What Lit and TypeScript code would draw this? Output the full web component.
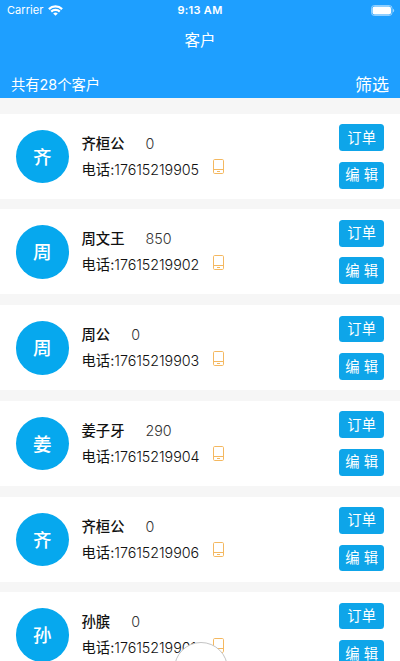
import { LitElement, css, html } from 'lit';
import { customElement, property } from 'lit/decorators.js';

interface Customer {
  name: string;
  amount: number;
  phone: string;
}

const CUSTOMERS: Customer[] = [
  { name: '齐桓公', amount: 0, phone: '17615219905' },
  { name: '周文王', amount: 850, phone: '17615219902' },
  { name: '周公', amount: 0, phone: '17615219903' },
  { name: '姜子牙', amount: 290, phone: '17615219904' },
  { name: '齐桓公', amount: 0, phone: '17615219906' },
  { name: '孙膑', amount: 0, phone: '17615219901' },
];

/** iOS style status bar: carrier, clock, battery. */
@customElement('status-bar')
export class StatusBar extends LitElement {
  render() {
    return html`
      <div class="side">
        <span>Carrier</span>
        <svg width="15" height="11" viewBox="0 0 15 11" fill="none" stroke="#fff" stroke-width="2.2">
          <path d="M0.9 4.1a9.4 9.4 0 0 1 13.2 0" />
          <path d="M3.2 6.6a6.1 6.1 0 0 1 8.6 0" />
          <path d="M7.5 10.8 5.2 8.5a3.3 3.3 0 0 1 4.6 0z" fill="#fff" stroke="none" />
        </svg>
      </div>
      <span class="time">9:13 AM</span>
      <div class="side end">
        <svg width="24" height="11" viewBox="0 0 24 11">
          <rect x="0.5" y="0.5" width="20.5" height="10" rx="2.8" fill="none" stroke="#fff" stroke-opacity="0.5" />
          <rect x="1.5" y="1.5" width="18.5" height="8" rx="2" fill="#fff" />
          <path d="M22 3.7c1.6 0.5 1.6 3.1 0 3.6z" fill="#fff" fill-opacity="0.55" />
        </svg>
      </div>
    `;
  }

  static styles = css`
    :host {
      display: flex;
      align-items: center;
      height: 20px;
      padding: 0 5px 0 7px;
      font-size: 11px;
      line-height: 20px;
    }

    .side {
      display: flex;
      flex: 1;
      align-items: center;
      gap: 5px;
      letter-spacing: 0.05px;
    }

    .end {
      justify-content: flex-end;
    }

    .time {
      position: relative;
      left: -1px;
      font-weight: 600;
      letter-spacing: 0.3px;
    }
  `;
}

@customElement('customer-card')
export class CustomerCard extends LitElement {
  @property({ attribute: false })
  customer!: Customer;

  render() {
    const { name, amount, phone } = this.customer;
    return html`
      <div class="avatar">${name[0]}</div>
      <div class="info">
        <div class="line">
          <span class="name">${name}</span>
          <span class="amount">${amount}</span>
        </div>
        <div class="line">
          <span class="phone">电话:<span class="number">${phone}</span></span>
          <svg width="11" height="15" viewBox="0 0 11 15" fill="none" stroke="#f4b860">
            <rect x="0.5" y="0.5" width="10" height="14" rx="1.2" />
            <path d="M0.5 10.5h10M4 12.5h3" />
          </svg>
        </div>
      </div>
      <div class="actions">
        <button type="button">订单</button>
        <button type="button">编 辑</button>
      </div>
    `;
  }

  static styles = css`
    :host {
      display: flex;
      align-items: flex-start;
      box-sizing: border-box;
      height: 85px;
      padding: 0 15.7px 0 15.5px;
      background: #fff;
      color: #111;
    }

    .avatar {
      width: 53.4px;
      height: 53.4px;
      margin-top: 16px;
      border-radius: 50%;
      background: #06a8ee;
      color: #fff;
      font-size: 18.5px;
      font-weight: 500;
      line-height: 54px;
      text-align: center;
    }

    .info {
      flex: 1;
      margin: 17px 0 0 12.7px;
    }

    .line {
      display: flex;
      align-items: center;
      height: 26px;
      font-size: 14.3px;
      line-height: 26px;
      white-space: nowrap;
    }

    .name {
      margin-right: 21px;
      font-weight: 500;
    }

    .amount {
      color: #333;
      font-weight: 300;
    }

    .phone {
      width: 131.4px;
    }

    .number {
      font-weight: 350;
      letter-spacing: -0.03px;
    }

    .line svg {
      margin-top: -6px;
    }

    .actions {
      display: flex;
      flex-direction: column;
      gap: 10.8px;
      margin-top: 10.4px;
    }

    button {
      width: 45.3px;
      height: 26.8px;
      padding: 0;
      border: 0;
      border-radius: 3.5px;
      background: #0ea5e9;
      color: #fff;
      font-family: inherit;
      font-size: 14.3px;
      line-height: 26px;
    }
  `;
}

@customElement('app-root')
export class AppRoot extends LitElement {
  render() {
    return html`
      <header>
        <status-bar></status-bar>
        <div class="title">客户</div>
        <div class="summary">
          <span>共有28个客户</span>
          <span class="filter">筛选</span>
        </div>
      </header>
      <main>
        ${CUSTOMERS.map((customer) => html`<customer-card .customer=${customer}></customer-card>`)}
      </main>
      <div class="fab"></div>
    `;
  }

  static styles = css`
    :host {
      display: block;
      position: relative;
      height: 661px;
      overflow: hidden;
      background: #f6f6f6;
      font-family: Inter, 'Noto Sans CJK SC', sans-serif;
    }

    header {
      box-sizing: border-box;
      height: 98.3px;
      background: #1e9fff;
      color: #fff;
    }

    .title {
      height: 41px;
      font-size: 15.5px;
      line-height: 41px;
      text-align: center;
    }

    .summary {
      display: flex;
      align-items: center;
      justify-content: space-between;
      height: 45px;
      padding: 0 11px;
      font-size: 14.3px;
    }

    .filter {
      font-size: 17px;
    }

    main {
      display: flex;
      flex-direction: column;
      gap: 10.7px;
      padding-top: 15.5px;
    }

    /* round button peeking in over the list from the bottom edge */
    .fab {
      position: absolute;
      left: 173.5px;
      top: 641.5px;
      box-sizing: border-box;
      width: 54px;
      height: 54px;
      border: 1.5px solid #c4c4c4;
      border-radius: 50%;
      background: #fff;
    }
  `;
}

declare global {
  interface HTMLElementTagNameMap {
    'status-bar': StatusBar;
    'customer-card': CustomerCard;
    'app-root': AppRoot;
  }
}
